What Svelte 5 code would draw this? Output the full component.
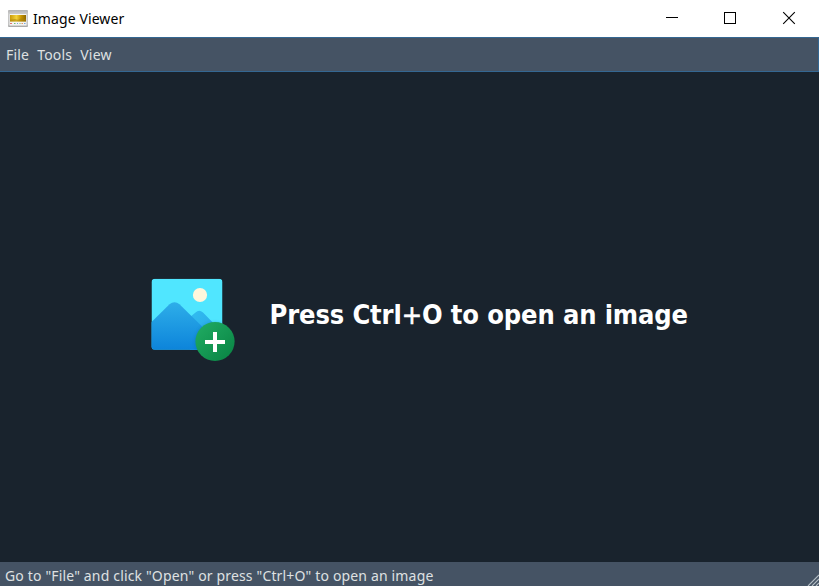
<script>
  const menus = ['File', 'Tools', 'View'];
</script>

<div class="window">
  <header class="titlebar">
    <svg class="app-icon" width="20" height="18" viewBox="0 0 20 18">
      <defs>
        <linearGradient id="frame" x1="0" y1="0" x2="0" y2="1">
          <stop offset="0" stop-color="#b2b2b2" /><stop offset=".2" stop-color="#c9c9c9" />
          <stop offset=".85" stop-color="#c4c4c4" /><stop offset="1" stop-color="#a5a5a5" />
        </linearGradient>
        <linearGradient id="gold" x1="0" y1="0" x2="1" y2="0">
          <stop offset="0" stop-color="#c99a08" /><stop offset=".4" stop-color="#f3d23a" />
          <stop offset=".7" stop-color="#c79400" /><stop offset="1" stop-color="#8e6800" />
        </linearGradient>
      </defs>
      <rect width="20" height="17" rx="1" fill="url(#frame)" />
      <rect x="1.500" y="4" width="17" height="11.500" fill="#f4f4f2" />
      <rect x="2" y="5" width="16" height="6.500" fill="url(#gold)" />
      <path d="M2 9.700l5-.7 3 .8 3-1.300 5 .5v2.500H2z" fill="#a67d0a" opacity=".5" />
      <path d="M2 13.500h2" stroke="#e27272" /><path d="M6 13.500h1.500M11.500 13.500h1" stroke="#72bd72" />
      <path d="M9 13.500h1" stroke="#779ce0" /><path d="M13.500 13.500h1.500" stroke="#e29665" />
      <path d="M16 13.500h1.500" stroke="#77a5dc" />
    </svg>
    <span class="title">Image Viewer</span>
    <div class="controls">
      <svg width="58" height="37" shape-rendering="crispEdges"><path d="M21 17.500h12" stroke="#000" /></svg>
      <svg width="58" height="37" shape-rendering="crispEdges"><rect x="21.500" y="12.500" width="11" height="11" fill="none" stroke="#000" /></svg>
      <svg width="58" height="37"><path d="M22.200 12.200l11.600 11.600M33.800 12.200L22.200 23.800" stroke="#000" stroke-width="1.100" /></svg>
    </div>
  </header>
  <nav class="menubar">
    {#each menus as menu}<span>{menu}</span>{/each}
  </nav>
  <main>
    <svg class="picture" width="86" height="86" viewBox="0 0 86 86">
      <defs>
        <linearGradient id="front" x1="0" y1="0" x2="0" y2="1">
          <stop offset="0" stop-color="#2eaee9" /><stop offset="1" stop-color="#0c83da" />
        </linearGradient>
        <linearGradient id="back" x1="0" y1="0" x2="1" y2="1">
          <stop offset="0" stop-color="#32bdf0" /><stop offset="1" stop-color="#259de4" />
        </linearGradient>
        <linearGradient id="add" x1="0" y1="0" x2="1" y2="1">
          <stop offset="0" stop-color="#21ad64" /><stop offset="1" stop-color="#088242" />
        </linearGradient>
        <clipPath id="card"><rect x="1.500" y=".7" width="71" height="71" rx="3.500" /></clipPath>
        <filter id="shade"><feGaussianBlur stdDeviation="1.500" /></filter>
      </defs>
      <g clip-path="url(#card)">
        <rect x="1.500" y=".7" width="71" height="71" fill="#50e6ff" />
        <path d="M40 39L45.500 34.500Q49 31 53 34.500L74 56V73H40z" fill="url(#back)" />
        <path d="M1 44.500L19.500 26.300Q24.500 22 29.500 26.300L73 69V73H1z" fill="url(#front)" />
        <circle cx="50" cy="17" r="7.100" fill="#fff7dc" />
        <circle cx="65" cy="64" r="20" fill="#075d98" opacity=".3" filter="url(#shade)" />
      </g>
      <circle cx="65" cy="63.500" r="19.600" fill="url(#add)" />
      <path d="M55 64h20M65 54v20" stroke="#fff" stroke-width="4" />
    </svg>
    <h1>Press Ctrl<span class="plus">+</span>O to open an image</h1>
  </main>
  <footer>
    <span>Go to "File" and click "Open" or press "Ctrl+O" to open an image</span>
    <svg width="12" height="12" viewBox="0 0 12 12"><path d="M1 12L12 1M5 12l7-7M9 12l3-3" stroke="#b5bfc5" stroke-width="1.100" /></svg>
  </footer>
</div>

<style>
  .window {
    width: 819px;
    height: 586px;
    display: flex;
    flex-direction: column;
    overflow: hidden;
    background: #19232d;
    font: 14px/20px "Noto Sans", sans-serif;
    white-space: nowrap;
  }
  svg { display: block; flex: none; }
  .titlebar {
    height: 37px;
    flex: none;
    display: flex;
    align-items: center;
    padding-left: 8px;
    box-sizing: border-box;
    background: #fff;
    color: #000;
  }
  .app-icon { margin-right: 5px; }
  .title { letter-spacing: 0.1px; }
  .controls { display: flex; margin-left: auto; }
  .menubar {
    height: 35px;
    flex: none;
    box-sizing: border-box;
    display: flex;
    align-items: center;
    gap: 8px;
    padding-left: 6px;
    background: #455364;
    border: solid #346792;
    border-width: 1px 1px 1px 0;
    color: #dfe1e2;
    letter-spacing: 0.2px;
  }
  main {
    flex: 1;
    display: flex;
    align-items: center;
    padding-left: 150px;
  }
  .picture { margin-top: 8px; }
  h1 {
    margin: 0 0 4px 33.5px;
    color: #fff;
    font: bold 27px/36px "DejaVu Sans Condensed", "DejaVu Sans", sans-serif;
    font-stretch: condensed;
    letter-spacing: -0.12px;
  }
  .plus { font-weight: 400; -webkit-text-stroke: 0.6px #fff; }
  footer {
    height: 24px;
    flex: none;
    box-sizing: border-box;
    display: flex;
    justify-content: space-between;
    align-items: flex-end;
    padding-left: 5px;
    background: #455364;
    color: #dfe1e2;
    letter-spacing: 0.16px;
  }
</style>
